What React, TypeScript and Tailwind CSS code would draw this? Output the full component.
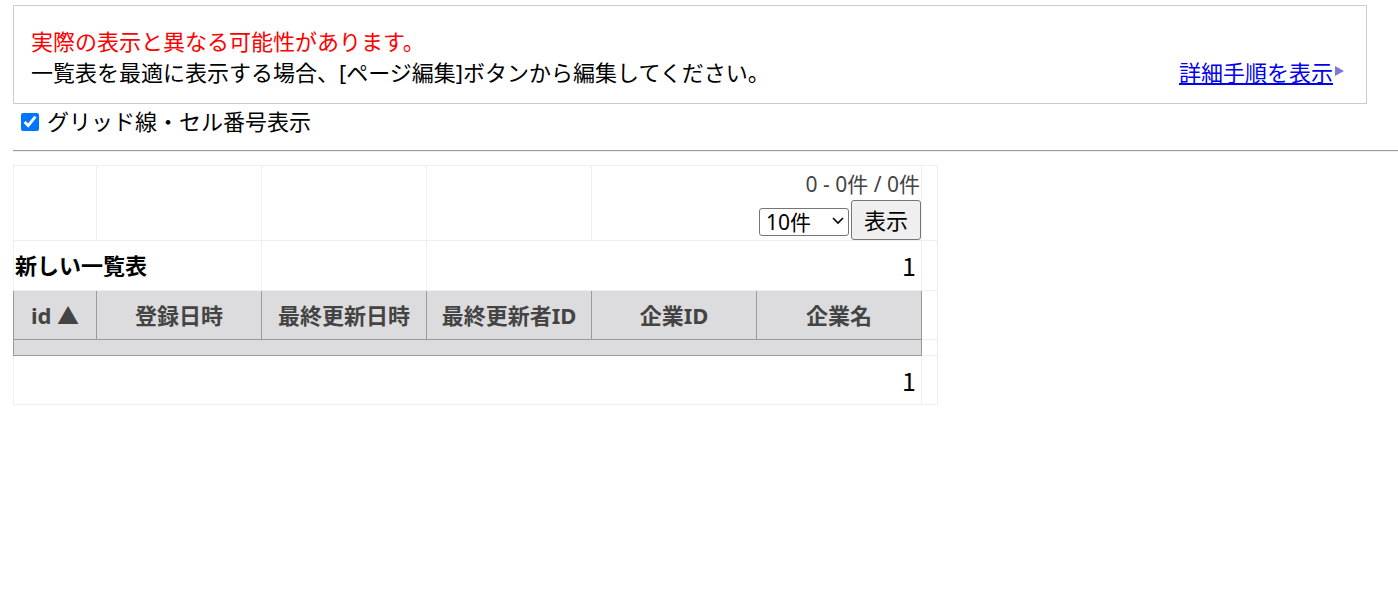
import React from 'react';

const font = "font-['Noto_Sans','Noto_Sans_CJK_JP',sans-serif]";
const cjk = "font-['Noto_Sans_CJK_JP',sans-serif]";

const headers = ['id ▲', '登録日時', '最終更新日時', '最終更新者ID', '企業ID', '企業名'];

export default function App() {
  return (
    <div className={`${font} pl-[13px] pt-[5px] text-[22px] leading-[31px] text-black bg-white min-h-[604px]`}>
      <div className="w-[1354px] border border-[#cccccc] pl-[17px] pr-[21px] pt-[20px] pb-[15px]">
        <p className="text-[#ff0000]">実際の表示と異なる可能性があります。</p>
        <div className="flex items-center justify-between">
          <p>一覧表を最適に表示する場合、[ページ編集]ボタンから編集してください。</p>
          <div className="flex items-center">
            <a href="#" className="text-[#0000ee] underline">詳細手順を表示</a>
            <svg width="11" height="12" viewBox="0 0 11 12" className="ml-[1px] mt-[-4px]">
              <polygon points="1,1 10,6 1,11" fill="#7a7ad6" />
            </svg>
          </div>
        </div>
      </div>

      <label className="flex items-center mt-[2px] ml-[8px] h-[31px]">
        <input type="checkbox" defaultChecked className="w-[18px] h-[18px] accent-[#0075ff] m-0" />
        <span className="ml-[8px]">グリッド線・セル番号表示</span>
      </label>

      <div className="mt-[13px] border-t border-t-[#9a9a9a] border-b border-b-[#eeeeee]" />

      <table className="mt-[13px] border-collapse table-fixed w-[924px]">
        <colgroup>
          <col className="w-[83px]" />
          <col className="w-[165px]" />
          <col className="w-[165px]" />
          <col className="w-[165px]" />
          <col className="w-[165px]" />
          <col className="w-[165px]" />
          <col className="w-[16px]" />
        </colgroup>
        <tbody>
          <tr className="h-[75px]">
            <td className="border border-[#eeeeee]" />
            <td className="border border-[#eeeeee]" />
            <td className="border border-[#eeeeee]" />
            <td className="border border-[#eeeeee]" />
            <td colSpan={2} className="border border-[#eeeeee] p-0 align-top">
              <div className="text-right text-[21px] text-[#444444] pt-[3px] pr-[1px]">0 - 0件 / 0件</div>
              <div className="flex justify-end items-end">
                <div className="relative mb-[3px]">
                  <select className={`appearance-none w-[90px] h-[28px] border border-[#767676] rounded-[3px] text-[21px] leading-[24px] pl-[6px] bg-white ${font}`}>
                    <option>10件</option>
                    <option>20件</option>
                    <option>50件</option>
                  </select>
                  <svg width="12" height="8" viewBox="0 0 12 8" className="absolute right-[5px] top-[11px] pointer-events-none">
                    <polyline points="1,1 6,6 11,1" fill="none" stroke="#000" strokeWidth="1.6" />
                  </svg>
                </div>
                <button className="w-[70px] h-[40px] ml-[2px] bg-[#efefef] border border-[#767676] rounded-[3px] text-[22px]">
                  表示
                </button>
              </div>
            </td>
            <td className="border border-[#eeeeee]" />
          </tr>
          <tr className="h-[50px]">
            <td colSpan={2} className="border border-[#eeeeee] font-bold p-0 pl-[1px]">新しい一覧表</td>
            <td className="border border-[#eeeeee]" />
            <td colSpan={3} className={`border border-[#eeeeee] text-right text-[25px] p-0 pr-[5px] ${cjk}`}>1</td>
            <td className="border border-[#eeeeee]" />
          </tr>
          <tr className="h-[49px] bg-[#dcdcde]">
            {headers.map((h) => (
              <th key={h} className="border border-[#9a9a9a] text-[#444444] font-bold text-center p-0">
                {h}
              </th>
            ))}
            <td className="border border-[#eeeeee] bg-white" />
          </tr>
          <tr className="h-[16px]">
            <td colSpan={6} className="border border-[#9a9a9a] bg-[#dcdcde] p-0" />
            <td className="border border-[#eeeeee]" />
          </tr>
          <tr className="h-[49px]">
            <td colSpan={6} className={`border border-[#eeeeee] text-right text-[25px] p-0 pr-[5px] ${cjk}`}>1</td>
            <td className="border border-[#eeeeee]" />
          </tr>
        </tbody>
      </table>
    </div>
  );
}
